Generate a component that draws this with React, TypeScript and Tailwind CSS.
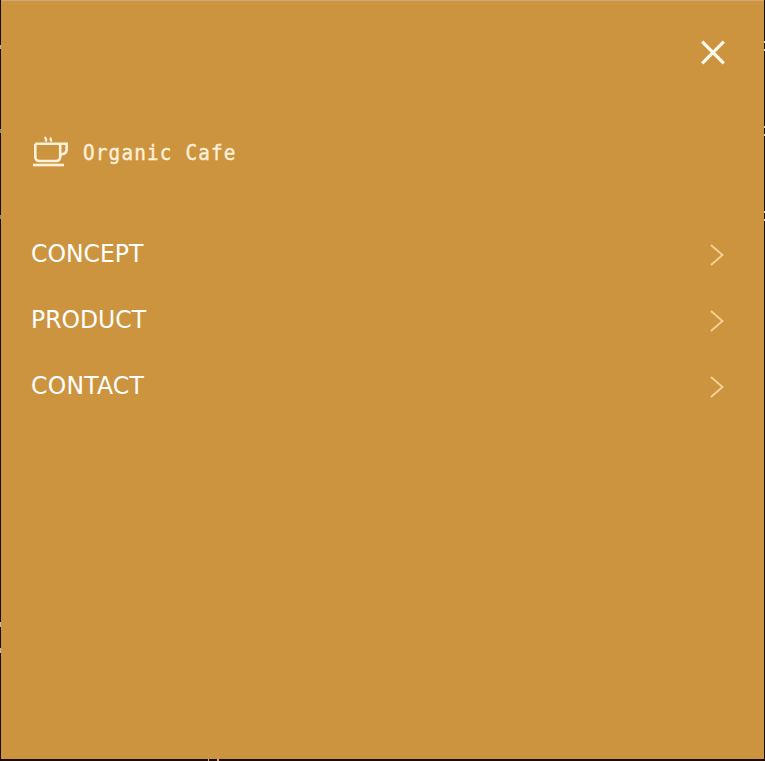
const items = [
  { label: "CONCEPT", spacing: "tracking-[0px]" },
  { label: "PRODUCT", spacing: "tracking-[0px]" },
  { label: "CONTACT", spacing: "tracking-[0.25px]" },
];

function CloseIcon() {
  return (
    <svg width="24" height="25" viewBox="0 0 24 25" fill="none" stroke="#fffaf0" strokeWidth="3.2">
      <path d="M1.2 1.7 22.8 23.3M22.8 1.7 1.2 23.3" />
    </svg>
  );
}

function CupIcon() {
  return (
    <svg width="37" height="32" viewBox="0 0 37 32" fill="none" stroke="#fff0d9" strokeWidth="2.6">
      <path d="M3.3 7.8H34.6V13.5Q34.6 18.4 28.2 18.4" />
      <path d="M3.3 7.8V20.5Q3.3 25 7.8 25H23.7Q28.2 25 28.2 20.5V7.8" />
      <path d="M1 29H32" />
      <path d="M12.6 1Q14.8 2.8 13.8 5.6M17.8 2Q19.7 3.4 18.9 5.6" strokeWidth="2.2" />
    </svg>
  );
}

function Chevron() {
  return (
    <svg width="14" height="22" viewBox="0 0 14 22" fill="none" stroke="#f7cf98" strokeWidth="1.9">
      <path d="M1 1 12.5 11 1 21" />
    </svg>
  );
}

/* Slivers of the page that stay visible around the open drawer. */
function LeftEdge() {
  return (
    <div className="flex flex-col bg-[#1c0b05]">
      <i className="mt-[45px] h-1 bg-[#bba9a0]" />
      <i className="mt-20 h-1 bg-[#6f928f]" />
      <i className="mt-[82px] h-1 bg-[#6f928f]" />
      <i className="mt-[403px] h-[5px] bg-[#c5b6a8]" />
      <i className="mt-[21px] h-[5px] bg-[#c5b6a8]" />
    </div>
  );
}

function RightEdge() {
  return (
    <div className="flex flex-col gap-[75px] bg-[#12100c] pt-[41px]">
      {[0, 1, 2].map((n) => (
        <div key={n} className="flex flex-col gap-1.5">
          <i className="h-0.5 bg-[#c9d2bd]" />
          <i className="h-0.5 bg-[#c9d2bd]" />
        </div>
      ))}
    </div>
  );
}

export default function App() {
  return (
    <div className="grid h-[761px] w-[765px] grid-cols-[1px_1fr_1px] grid-rows-[759px_2px] overflow-hidden bg-[#1c0b05]">
      <LeftEdge />
      <main className="border-t border-[#d1a977] bg-[#cd943f]">
        <header className="flex h-[103px] justify-end pt-[39px] pr-[39px]">
          <button aria-label="Close menu" className="h-[25px] w-6">
            <CloseIcon />
          </button>
        </header>
        <div className="flex h-[94px] items-start gap-3.5 pt-8 pl-[31px] text-[#fff0d9]">
          <CupIcon />
          <span className="origin-left scale-x-[0.88] pt-px font-['DejaVu_Sans_Mono',monospace] text-[22px] leading-[32px] tracking-[1.3px] whitespace-nowrap [-webkit-text-stroke:0.4px_#fff0d9]">
            Organic Cafe
          </span>
        </div>
        <nav className="flex flex-col pt-[23px]">
          {items.map((item) => (
            <a key={item.label} className="flex h-[66px] items-center justify-between pr-10 pl-[30px] text-white">
              <span className={`origin-left scale-x-[0.94] font-['DejaVu_Sans',sans-serif] text-[25px] leading-[30px] ${item.spacing}`}>
                {item.label}
              </span>
              <span className="pt-0.5">
                <Chevron />
              </span>
            </a>
          ))}
        </nav>
      </main>
      <RightEdge />
      <div className="col-span-3 flex gap-2 pl-[208px]">
        <i className="w-px bg-[#d0aa83]" />
        <i className="w-0.5 bg-[#d0aa83]" />
      </div>
    </div>
  );
}
